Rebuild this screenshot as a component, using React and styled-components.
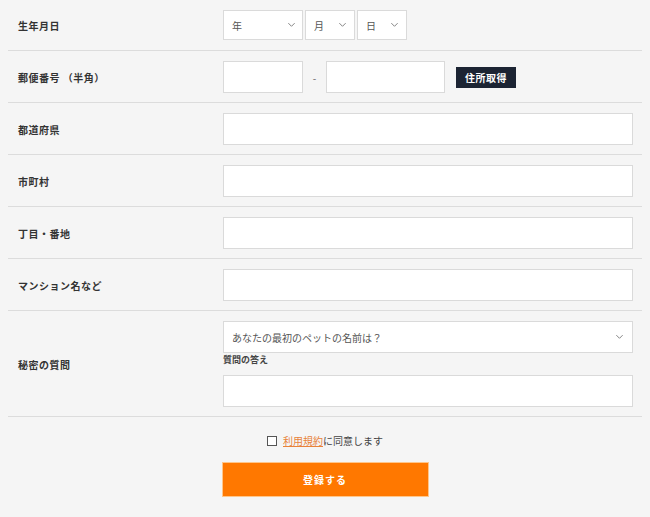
import styled, { createGlobalStyle } from "styled-components";

const GlobalStyle = createGlobalStyle`
  html, body {
    margin: 0;
    padding: 0;
    background: #f5f5f5;
  }
  body {
    font-family: "Noto Sans CJK JP", "Noto Sans", sans-serif;
    color: #333;
  }
`;

const Form = styled.form`
  padding: 0 8px;
`;

const Row = styled.div`
  display: grid;
  grid-template-columns: 215px 1fr;
  align-items: center;
  padding: ${(props) => (props.$first ? "10px 0 10px" : "10px 0 9px")};
  border-bottom: 1px solid #dcdcdc;
`;

const Label = styled.div`
  padding-left: 10px;
  font-size: 10px;
  font-weight: bold;
  letter-spacing: 0.5px;
  color: #333;
`;

const Field = styled.div`
  display: flex;
  align-items: center;
  padding-right: 9px;
`;

const Stack = styled.div`
  display: flex;
  flex-direction: column;
  padding-right: 9px;
`;

const TextInput = styled.input`
  box-sizing: border-box;
  height: 32px;
  width: ${(props) => props.$w || "100%"};
  border: 1px solid #dadada;
  background: #fff;
  margin: 0;
  padding: 0 8px;
  font-family: inherit;
  font-size: 10px;
  outline: none;
`;

const SelectWrap = styled.div`
  position: relative;
  width: ${(props) => props.$w || "100%"};
  margin-right: ${(props) => props.$mr || "0"};
`;

const Select = styled.select`
  box-sizing: border-box;
  width: 100%;
  height: ${(props) => props.$h || "30px"};
  appearance: none;
  -webkit-appearance: none;
  border: 1px solid #dadada;
  border-radius: 0;
  background: #fff;
  margin: 0;
  padding: 0 8px;
  font-family: inherit;
  font-size: 10px;
  color: #555;
  outline: none;
`;

const Chevron = styled.svg`
  position: absolute;
  right: ${(props) => props.$right || "9px"};
  top: 50%;
  width: 9px;
  height: 9px;
  margin-top: -5px;
  pointer-events: none;
`;

const Dash = styled.span`
  width: 23px;
  text-align: center;
  font-size: 10px;
  color: #666;
`;

const DarkButton = styled.button`
  height: 21px;
  margin-left: 11px;
  padding: 0 9px;
  border: none;
  background: #1c2433;
  color: #fff;
  font-family: inherit;
  font-size: 10px;
  font-weight: bold;
  letter-spacing: 0.5px;
`;

const SubLabel = styled.div`
  height: 22px;
  line-height: 14px;
  font-size: 9px;
  font-weight: bold;
  color: #444;
`;

const Agree = styled.div`
  display: flex;
  align-items: center;
  justify-content: center;
  margin-top: 16px;
  font-size: 10px;
  color: #444;
`;

const Box = styled.span`
  box-sizing: border-box;
  width: 10px;
  height: 10px;
  border: 1px solid #555;
  background: #fff;
  margin-right: 6px;
`;

const TermsLink = styled.a`
  color: #e8823a;
  text-decoration: underline;
`;

const SubmitRow = styled.div`
  display: flex;
  justify-content: center;
  margin-top: 14px;
`;

const Submit = styled.button`
  box-sizing: border-box;
  width: 207px;
  height: 35px;
  border: 1px solid #ffc68a;
  background: #ff7800;
  color: #fff;
  font-family: inherit;
  font-size: 10px;
  font-weight: bold;
  letter-spacing: 1px;
`;

const ChevronIcon = ({ right }) => (
  <Chevron viewBox="0 0 10 10" $right={right}>
    <path d="M1.5 3.5 L5 7 L8.5 3.5" fill="none" stroke="#777" strokeWidth="1" />
  </Chevron>
);

const App = () => {
  return (
    <>
      <GlobalStyle />
      <Form onSubmit={(e) => e.preventDefault()}>
        <Row $first>
          <Label>生年月日</Label>
          <Field>
            <SelectWrap $w="80px" $mr="2px">
              <Select defaultValue="">
                <option value="">年</option>
              </Select>
              <ChevronIcon right="7px" />
            </SelectWrap>
            <SelectWrap $w="50px" $mr="2px">
              <Select defaultValue="">
                <option value="">月</option>
              </Select>
              <ChevronIcon right="8px" />
            </SelectWrap>
            <SelectWrap $w="50px">
              <Select defaultValue="">
                <option value="">日</option>
              </Select>
              <ChevronIcon right="8px" />
            </SelectWrap>
          </Field>
        </Row>
        <Row>
          <Label>郵便番号 （半角）</Label>
          <Field>
            <TextInput $w="80px" />
            <Dash>-</Dash>
            <TextInput $w="119px" />
            <DarkButton type="button">住所取得</DarkButton>
          </Field>
        </Row>
        <Row>
          <Label>都道府県</Label>
          <Field>
            <TextInput />
          </Field>
        </Row>
        <Row>
          <Label>市町村</Label>
          <Field>
            <TextInput />
          </Field>
        </Row>
        <Row>
          <Label>丁目・番地</Label>
          <Field>
            <TextInput />
          </Field>
        </Row>
        <Row>
          <Label>マンション名など</Label>
          <Field>
            <TextInput />
          </Field>
        </Row>
        <Row>
          <Label>秘密の質問</Label>
          <Stack>
            <SelectWrap>
              <Select $h="32px" defaultValue="pet">
                <option value="pet">あなたの最初のペットの名前は？</option>
              </Select>
              <ChevronIcon right="9px" />
            </SelectWrap>
            <SubLabel>質問の答え</SubLabel>
            <TextInput />
          </Stack>
        </Row>
        <Agree>
          <Box />
          <TermsLink href="#">利用規約</TermsLink>に同意します
        </Agree>
        <SubmitRow>
          <Submit type="submit">登録する</Submit>
        </SubmitRow>
      </Form>
    </>
  );
};

export default App;
